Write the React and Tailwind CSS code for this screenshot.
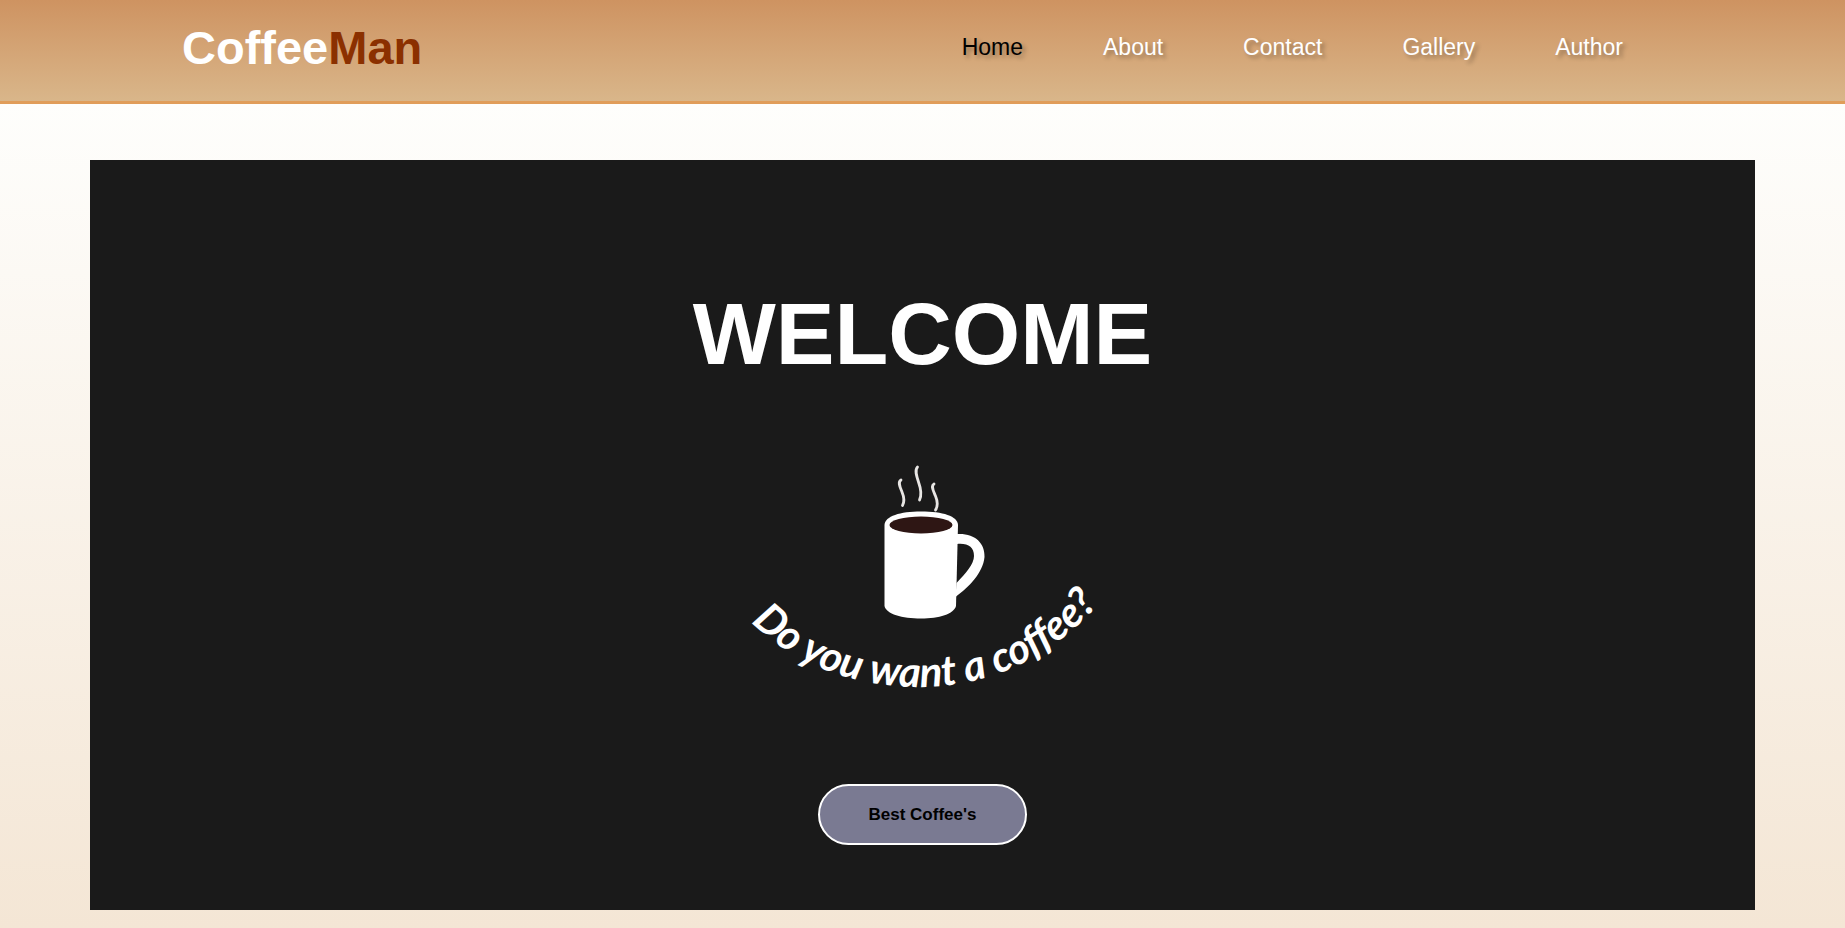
const links = ["Home", "About", "Contact", "Gallery", "Author"];

function Header() {
  return (
    <header className="flex flex-wrap items-center justify-between border-b-[3px] border-[#e09d5a] bg-gradient-to-b from-[#ce9361] to-[#d9b68a] px-[182px] pt-6 pb-[29px]">
      <a href="#home" className="text-[47px] leading-[48px] font-bold text-white">
        Coffee<span className="text-[#8b3000]">Man</span>
      </a>
      <nav aria-label="Main" className="pb-0.5">
        <ul className="flex flex-wrap">
          {links.map((label, i) => (
            <li key={label}>
              <a
                href={`#${label.toLowerCase()}`}
                aria-current={i === 0 ? "page" : undefined}
                className={`block px-10 text-[23px] leading-6 [text-shadow:3px_3px_4px_rgba(0,0,0,0.3)] ${i === 0 ? "text-black" : "text-white"}`}
              >
                {label}
              </a>
            </li>
          ))}
        </ul>
      </nav>
    </header>
  );
}

function CoffeeArt() {
  return (
    <svg viewBox="0 0 365 250" className="mt-18 h-[250px] w-[365px] overflow-visible" role="img" aria-label="Do you want a coffee?">
      <g fill="none" stroke="#e8e6e4" strokeWidth="2.8" strokeLinecap="round">
        <path d="M161 30 C157.500 32 160 37 162 42 C164.500 48 164.500 52 162.500 55.500" />
        <path d="M177.500 17 C174.500 20 176.500 26 178.500 32 C181 39 181.500 46 179.500 50" />
        <path d="M194 34 C190.500 36 193.500 41 195.500 46 C198 52 198 56 195.500 60" />
      </g>
      <path
        d="M217 84 C235 83 245 93 244.500 107 C243 123 229 137 215.500 147 L216.500 133 C226 123 234 114 234 106 C234 97 228 93 217 94 Z"
        fill="#fff"
      />
      <path d="M144.500 75 C145 66 160 61.500 181 61.500 C203 61.500 217.500 66 218 75 L216 156 C214 164 199 168.500 181 168.500 C162 168.500 146 164 144.500 156 Z" fill="#fff" />
      <ellipse cx="181" cy="75" rx="31.500" ry="8.500" fill="#2e1614" />
      <path id="smile" d="M11 172 C56 217 118 237 180 237 C246 237 312 210 364 148" fill="none" />
      <text fill="#fff" className="font-['Lato',sans-serif] text-[42px] font-bold italic">
        <textPath href="#smile">Do you want a coffee?</textPath>
      </text>
    </svg>
  );
}

export default function App() {
  return (
    <div className="min-h-screen bg-[linear-gradient(to_bottom,#ffffff_0%,#fefefc_11%,#f4e6d5_100%)] font-['Liberation_Sans',Arial,sans-serif]">
      <Header />
      <main className="px-[90px] pt-14 pb-[18px]">
        <section className="flex flex-col items-center bg-[#1a1a1a] pt-[130px] pb-[65px]">
          <h1 className="text-[88px] leading-[88px] font-bold text-white">WELCOME</h1>
          <CoffeeArt />
          <button
            type="button"
            className="mt-21 rounded-full border-2 border-white bg-[#7a7a92] px-[49px] py-[18px] text-[17px] leading-[21px] font-bold text-black"
          >
            Best Coffee's
          </button>
        </section>
      </main>
    </div>
  );
}
